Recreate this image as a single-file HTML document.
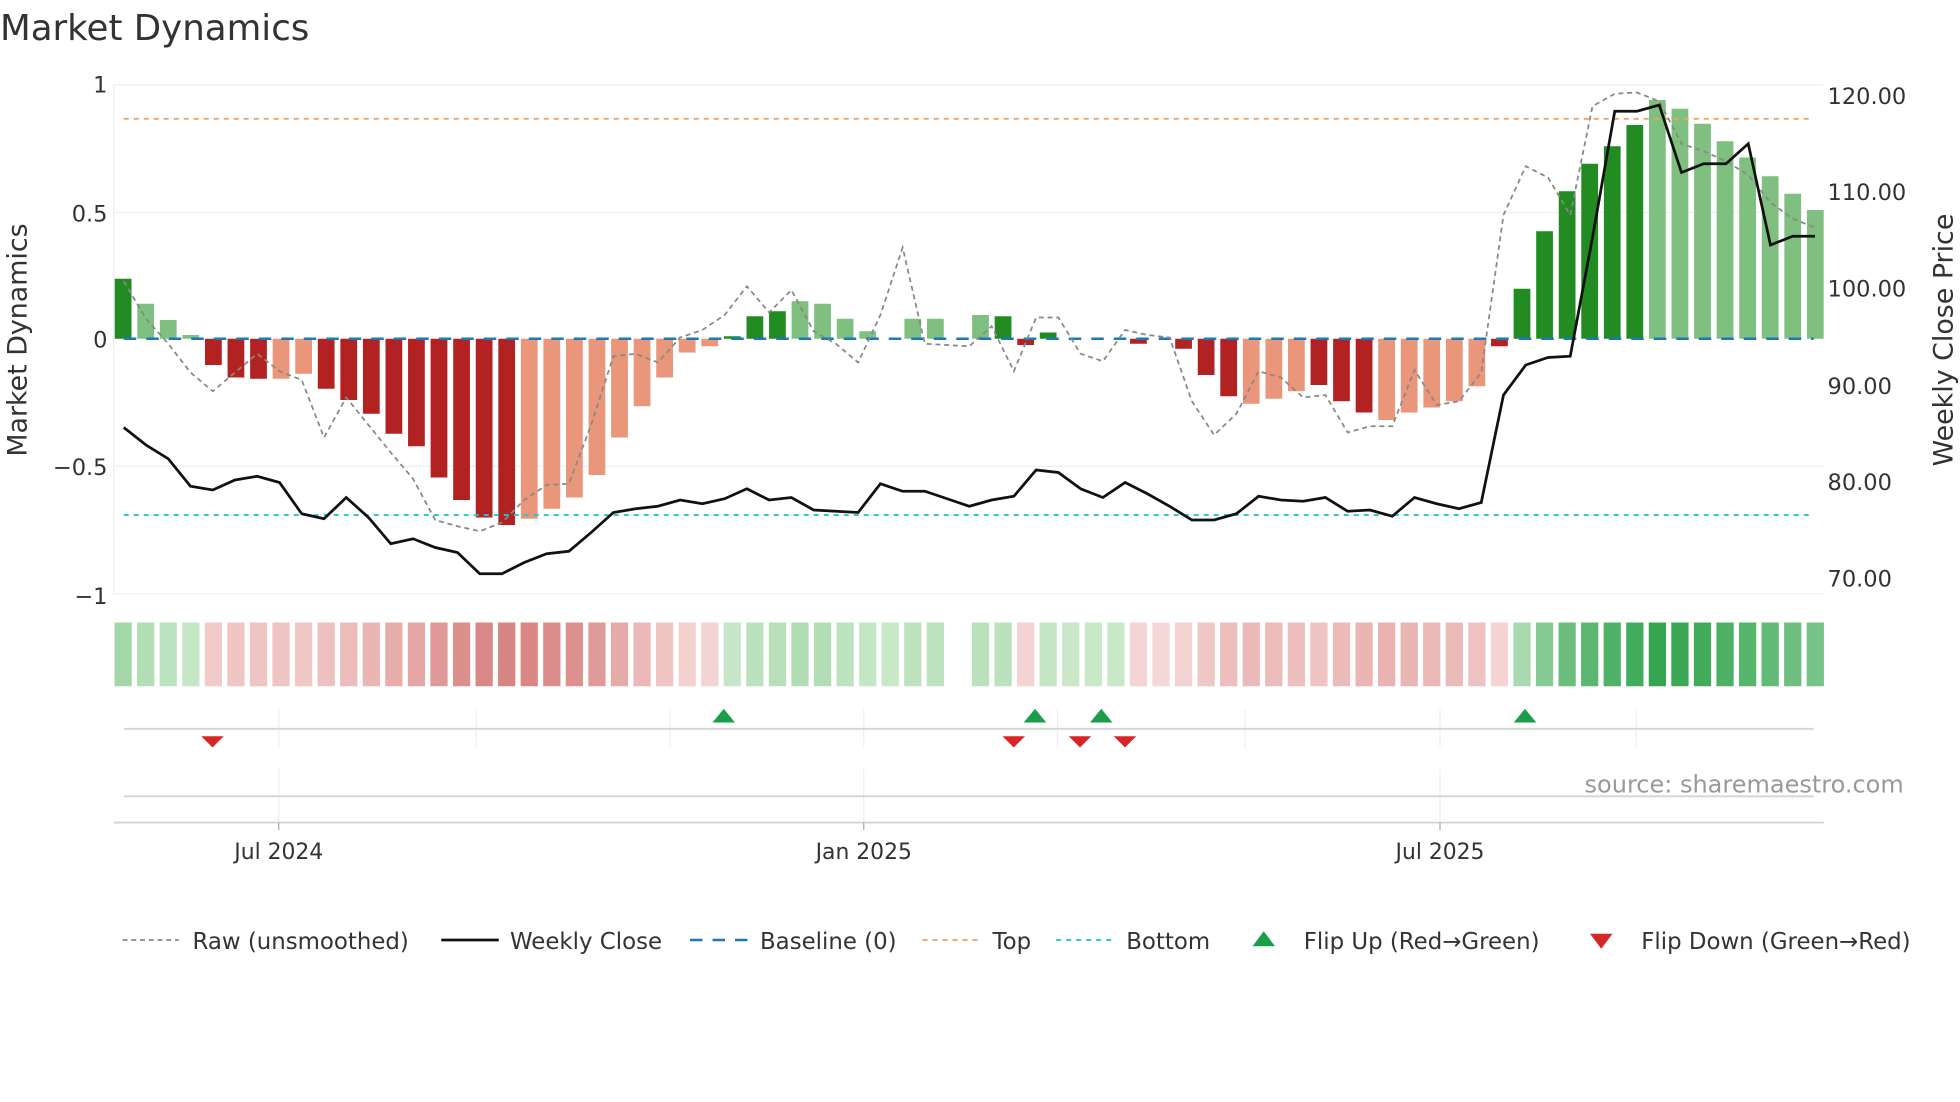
<!DOCTYPE html>
<html><head><meta charset="utf-8"><style>
html,body{margin:0;padding:0;background:#fff;}
svg{display:block;font-family:"DejaVu Sans","Liberation Sans",sans-serif;}
</style></head><body>
<svg id="s" width="1960" height="1102" viewBox="0 0 1568 881.6" xmlns="http://www.w3.org/2000/svg">
<text x="0" y="32" font-size="28.5" fill="#333">Market Dynamics</text>
<g stroke="#eceff3" stroke-width="1">
<line x1="91" y1="68" x2="1459" y2="68"/><line x1="91" y1="170" x2="1459" y2="170"/>
<line x1="91" y1="373" x2="1459" y2="373"/><line x1="91" y1="475" x2="1459" y2="475"/>
<line x1="91" y1="68" x2="91" y2="475"/>
</g>
<g font-size="18" fill="#333" text-anchor="end">
<text x="86" y="74">1</text><text x="86" y="177">0.5</text><text x="86" y="278">0</text>
<text x="86" y="380">−0.5</text><text x="86" y="483">−1</text>
</g>
<g font-size="18" fill="#333">
<text x="1462" y="83">120.00</text><text x="1462" y="160">110.00</text><text x="1462" y="237">100.00</text>
<text x="1462" y="315">90.00</text><text x="1462" y="392">80.00</text><text x="1462" y="469">70.00</text>
</g>
<text transform="translate(21,272) rotate(-90)" font-size="21.5" fill="#333" text-anchor="middle">Market Dynamics</text>
<text transform="translate(1562,272) rotate(-90)" font-size="21.5" fill="#333" text-anchor="middle">Weekly Close Price</text>
<g id="bars"></g>
<g id="heat"></g>
<line x1="99" y1="95" x2="1451" y2="95" stroke="#f4a460" stroke-width="1.5" stroke-dasharray="4,4"/>
<line x1="99" y1="412" x2="1451" y2="412" stroke="#22c7d0" stroke-width="1.5" stroke-dasharray="4,4"/>
<line x1="99" y1="271" x2="1451" y2="271" stroke="#1f77b4" stroke-width="2" stroke-dasharray="10,8"/>
<polyline id="raw" fill="none" stroke="#888" stroke-width="1.4" stroke-dasharray="4,3"/>
<polyline id="close" fill="none" stroke="#111" stroke-width="2.2"/>
<g stroke="#eceff3" stroke-width="1">
<line x1="223" y1="567" x2="223" y2="598"/><line x1="381" y1="567" x2="381" y2="598"/><line x1="536" y1="567" x2="536" y2="598"/><line x1="691" y1="567" x2="691" y2="598"/><line x1="846" y1="567" x2="846" y2="598"/><line x1="996" y1="567" x2="996" y2="598"/><line x1="1152" y1="567" x2="1152" y2="598"/><line x1="1309" y1="567" x2="1309" y2="598"/>
<line x1="223" y1="615" x2="223" y2="658"/><line x1="691" y1="615" x2="691" y2="658"/><line x1="1152" y1="615" x2="1152" y2="658"/>
</g>
<line x1="99" y1="583" x2="1451" y2="583" stroke="#d4d4d4" stroke-width="1.5"/>
<line x1="99" y1="637" x2="1451" y2="637" stroke="#d4d4d4" stroke-width="1.5"/>
<line x1="91" y1="658" x2="1459" y2="658" stroke="#d4d4d4" stroke-width="1.5"/>
<g stroke="#aaa"><line x1="223" y1="658" x2="223" y2="664"/><line x1="691" y1="658" x2="691" y2="664"/><line x1="1152" y1="658" x2="1152" y2="664"/></g>
<g fill="#1a9e4a">
<polygon points="570,578 579,567 588,578"/><polygon points="819,578 828,567 837,578"/><polygon points="872,578 881,567 890,578"/><polygon points="1211,578 1220,567 1229,578"/>
</g>
<g fill="#d62728">
<polygon points="161,589 179,589 170,598"/><polygon points="802,589 820,589 811,598"/><polygon points="855,589 873,589 864,598"/><polygon points="891,589 909,589 900,598"/>
</g>
<text x="1523" y="634" font-size="19.2" fill="#999" text-anchor="end">source: sharemaestro.com</text>
<g font-size="17.5" fill="#333" text-anchor="middle">
<text x="223" y="687">Jul 2024</text><text x="691" y="687">Jan 2025</text><text x="1152" y="687">Jul 2025</text>
</g>
<g font-size="18.3" fill="#333">
<line x1="98" y1="752" x2="143" y2="752" stroke="#888" stroke-width="1.4" stroke-dasharray="4,3"/>
<text x="154" y="759">Raw (unsmoothed)</text>
<line x1="353" y1="752" x2="399" y2="752" stroke="#111" stroke-width="2.2"/>
<text x="408" y="759">Weekly Close</text>
<line x1="552" y1="752" x2="598" y2="752" stroke="#1f77b4" stroke-width="2" stroke-dasharray="10,8"/>
<text x="608" y="759">Baseline (0)</text>
<line x1="738" y1="752" x2="784" y2="752" stroke="#f4a460" stroke-width="1.5" stroke-dasharray="4,4"/>
<text x="794" y="759">Top</text>
<line x1="845" y1="752" x2="891" y2="752" stroke="#22c7d0" stroke-width="1.5" stroke-dasharray="4,4"/>
<text x="901" y="759">Bottom</text>
<polygon points="1002,757 1011,745 1020,757" fill="#1a9e4a"/>
<text x="1043" y="759">Flip Up (Red→Green)</text>
<polygon points="1272,747 1290,747 1281,759" fill="#d62728"/>
<text x="1313" y="759">Flip Down (Green→Red)</text>
</g>
</svg>
<script>
var NS="http://www.w3.org/2000/svg";
var v=[223,243,256,268,292,302,303,303,299,311,320,331,347,357,382,400,414,420,415,407,398,380,350,325,302,282,277,269,253,249,241,243,255,265,271,255,255,271,252,253,276,266,271,271,271,275,271,279,300,317,323,319,313,308,321,330,336,330,326,321,309,277,231,185,153,131,117,100,80,87,99,113,126,141,155,168];
var t="DLLLDDDSSDDDDDDDDDSSSSSSSSSDDDLLLLDLLDLDDDDDDDDDDDSSSDDDSSSSSDDDDDDDLLLLLLL";
var bars=document.getElementById("bars"),heat=document.getElementById("heat");
var step=18.05,x0=98.5;
function mix(a,b,f){return "rgb("+a.map(function(c,i){return Math.round(c+(b[i]-c)*f)}).join(",")+")";}
for(var i=0;i<v.length;i++){
 var cx=x0+step*i,y=v[i],c;
 var pos=y<271;
 if(pos) c=(t[i]=="D")?"#228b22":"#7fbf7f"; else c=(t[i]=="D")?"#b22222":"#e9967a";
 if(Math.abs(y-271)>=1){
 var r=document.createElementNS(NS,"rect");
 r.setAttribute("x",cx-6.7);r.setAttribute("width",13.4);
 r.setAttribute("y",Math.min(y,271));r.setAttribute("height",Math.max(Math.abs(y-271),1.5));
 r.setAttribute("fill",c);bars.appendChild(r);}
 if(i==37)continue;
 var f=Math.min(Math.abs(y-271)/190,1);
 var hc=(pos||y==271&&i>25&&i<45)?mix([200,232,200],[52,165,80],f):mix([245,215,213],[207,110,108],f);
 var h=document.createElementNS(NS,"rect");
 h.setAttribute("x",cx-6.9);h.setAttribute("width",13.8);h.setAttribute("y",498);h.setAttribute("height",51);
 h.setAttribute("fill",hc);heat.appendChild(h);
}
var raw=[225,255,275,298,313,298,283,297,304,350,318,340,362,383,416,421,425,418,400,388,387,340,285,283,290,270,264,252,229,250,232,265,275,290,252,198,275,276,277,261,297,254,254,283,289,264,268,270,321,348,331,297,302,318,316,346,341,341,296,324,321,298,172,133,142,172,85,75,74,81,115,121,129,140,162,175,182];
var cl=[342,356,367,389,392,384,381,386,411,415,398,414,435,431,438,442,459,459,450,443,441,426,410,407,405,400,403,399,391,400,398,408,409,410,387,393,393,399,405,400,397,376,378,391,398,386,395,405,416,416,411,397,400,401,398,409,408,413,398,403,407,402,316,292,286,285,190,89,89,84,138,131,131,115,196,189,189];
function pts(a){var n=a.length,s=(1452-99)/(n-1);return a.map(function(y,i){return (99+s*i).toFixed(1)+","+y}).join(" ");}
document.getElementById("raw").setAttribute("points",pts(raw));
document.getElementById("close").setAttribute("points",pts(cl));
</script>
</body></html>
